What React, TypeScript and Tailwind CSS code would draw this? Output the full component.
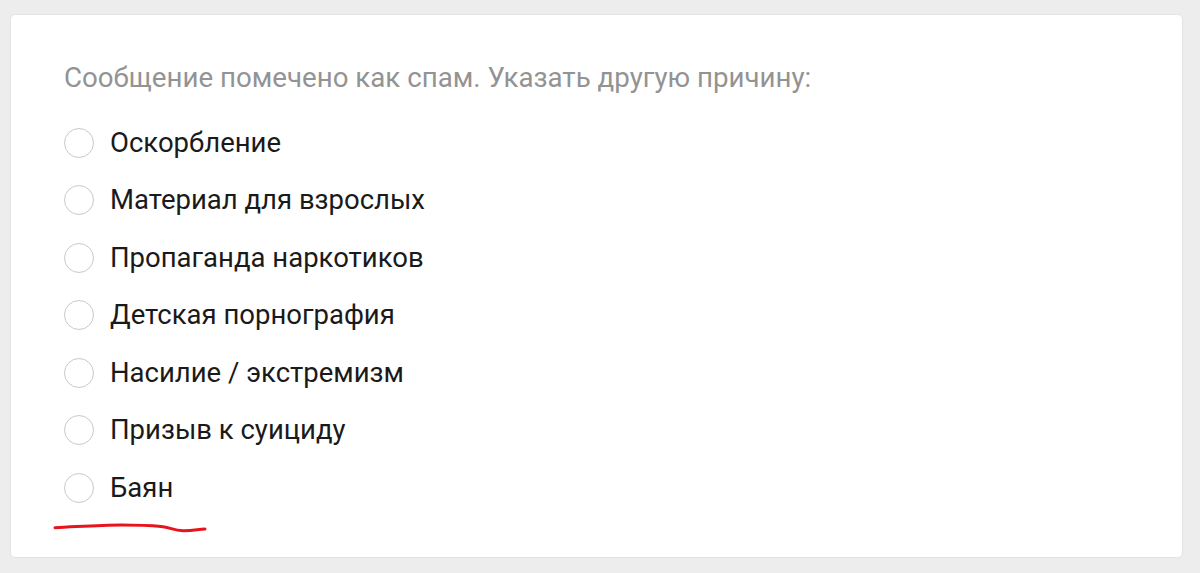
const reasons = [
  "Оскорбление",
  "Материал для взрослых",
  "Пропаганда наркотиков",
  "Детская порнография",
  "Насилие / экстремизм",
  "Призыв к суициду",
  "Баян",
];

export default function App() {
  return (
    <div className="w-[1200px] h-[573px] bg-[#ededee] pt-[14px] pl-[10px] pr-[17px] font-['Roboto',sans-serif]">
      <div className="relative h-[544px] bg-white border border-[#e1e3e6] rounded-[5px] pl-[53px] pt-[46px]">
        <p className="text-[27.7px] leading-[34px] text-[#939393]">
          Сообщение помечено как спам. Указать другую причину:
        </p>
        <ul className="mt-[19px] flex flex-col">
          {reasons.map((r) => (
            <li key={r} className="flex items-center h-[57.5px] gap-[16px]">
              <span className="w-[30px] h-[30px] rounded-full border-[1.5px] border-[#c8c9cc] shrink-0" />
              <span className="text-[27.5px] text-[#1a1a1a] leading-[34px]">{r}</span>
            </li>
          ))}
        </ul>
        {/* red hand-drawn underline */}
        <svg className="absolute left-[40px] top-[505px]" width="160" height="16" viewBox="0 0 160 16">
          <path
            d="M4 7.7 C 30 6.5, 50 5, 70 5 S 100 5.5, 110 6.5 S 122 10.5, 132 10.7 S 148 9, 154 9"
            fill="none"
            stroke="#e8141b"
            strokeWidth="3"
            strokeLinecap="round"
          />
        </svg>
      </div>
    </div>
  );
}
